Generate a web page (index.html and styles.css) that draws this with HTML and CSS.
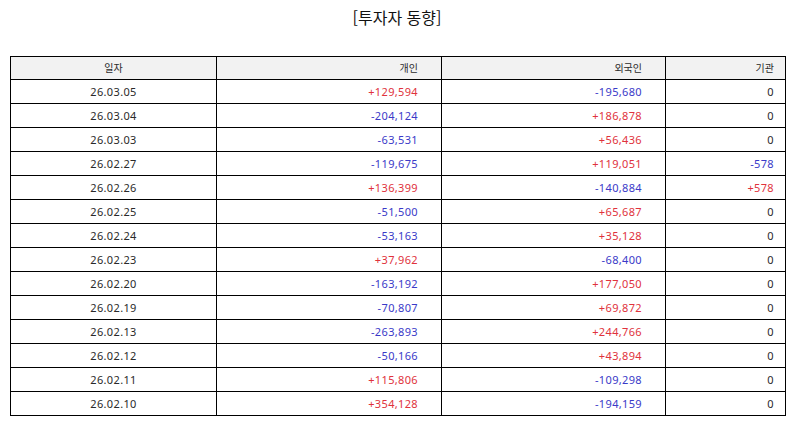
FILE: index.html
```html
<!DOCTYPE html>
<html lang="ko">
<head>
<meta charset="utf-8">
<link rel="stylesheet" href="styles.css">
</head>
<body>
<div class="page">
  <h1 class="title">[투자자 동향]</h1>
  <table class="grid">
    <colgroup>
      <col class="w-date"><col class="w-ind"><col class="w-for"><col class="w-inst">
    </colgroup>
    <thead>
      <tr><th class="c-date">일자</th><th class="c-num">개인</th><th class="c-num">외국인</th><th class="c-last">기관</th></tr>
    </thead>
    <tbody>
      <tr><td class="c-date">26.03.05</td><td class="c-num up">+129,594</td><td class="c-num down">-195,680</td><td class="c-last">0</td></tr>
      <tr><td class="c-date">26.03.04</td><td class="c-num down">-204,124</td><td class="c-num up">+186,878</td><td class="c-last">0</td></tr>
      <tr><td class="c-date">26.03.03</td><td class="c-num down">-63,531</td><td class="c-num up">+56,436</td><td class="c-last">0</td></tr>
      <tr><td class="c-date">26.02.27</td><td class="c-num down">-119,675</td><td class="c-num up">+119,051</td><td class="c-last down">-578</td></tr>
      <tr><td class="c-date">26.02.26</td><td class="c-num up">+136,399</td><td class="c-num down">-140,884</td><td class="c-last up">+578</td></tr>
      <tr><td class="c-date">26.02.25</td><td class="c-num down">-51,500</td><td class="c-num up">+65,687</td><td class="c-last">0</td></tr>
      <tr><td class="c-date">26.02.24</td><td class="c-num down">-53,163</td><td class="c-num up">+35,128</td><td class="c-last">0</td></tr>
      <tr><td class="c-date">26.02.23</td><td class="c-num up">+37,962</td><td class="c-num down">-68,400</td><td class="c-last">0</td></tr>
      <tr><td class="c-date">26.02.20</td><td class="c-num down">-163,192</td><td class="c-num up">+177,050</td><td class="c-last">0</td></tr>
      <tr><td class="c-date">26.02.19</td><td class="c-num down">-70,807</td><td class="c-num up">+69,872</td><td class="c-last">0</td></tr>
      <tr><td class="c-date">26.02.13</td><td class="c-num down">-263,893</td><td class="c-num up">+244,766</td><td class="c-last">0</td></tr>
      <tr><td class="c-date">26.02.12</td><td class="c-num down">-50,166</td><td class="c-num up">+43,894</td><td class="c-last">0</td></tr>
      <tr><td class="c-date">26.02.11</td><td class="c-num up">+115,806</td><td class="c-num down">-109,298</td><td class="c-last">0</td></tr>
      <tr><td class="c-date">26.02.10</td><td class="c-num up">+354,128</td><td class="c-num down">-194,159</td><td class="c-last">0</td></tr>
    </tbody>
  </table>
</div>
</body>
</html>
```
FILE: styles.css
```css
html, body {
  margin: 0;
  padding: 0;
  background: #ffffff;
}
.page {
  padding: 5px 10px 0 10px;
  font-family: "Noto Sans", "Noto Sans CJK KR", sans-serif;
  color: #222222;
}
.title {
  margin: 0 0 27px 0;
  font-family: "Noto Sans CJK KR", "Noto Sans", sans-serif;
  font-size: 16px;
  font-weight: 400;
  line-height: 24px;
  text-align: center;
  color: #111111;
}
.grid {
  width: 775px;
  border-collapse: collapse;
  table-layout: fixed;
  font-size: 11px;
  letter-spacing: 0.35px;
}
.w-date { width: 206px; }
.w-ind { width: 225px; }
.w-for { width: 224px; }
.w-inst { width: 120px; }
.grid th, .grid td {
  border: 1px solid #000000;
  padding: 0;
  height: 23px;
  line-height: 22px;
  font-weight: 400;
  white-space: nowrap;
  color: #2a2a2a;
}
.grid thead th {
  background: #f2f2f2;
  height: 22px;
  font-family: "Noto Sans CJK KR", sans-serif;
  font-size: 10px;
  letter-spacing: 0;
}
.c-date {
  text-align: center;
}
.grid .c-num {
  text-align: right;
  padding-right: 23px;
}
.grid .c-last {
  text-align: right;
  padding-right: 11px;
}
.grid .up { color: #e0323c; }
.grid .down { color: #3a3ac8; }
```
